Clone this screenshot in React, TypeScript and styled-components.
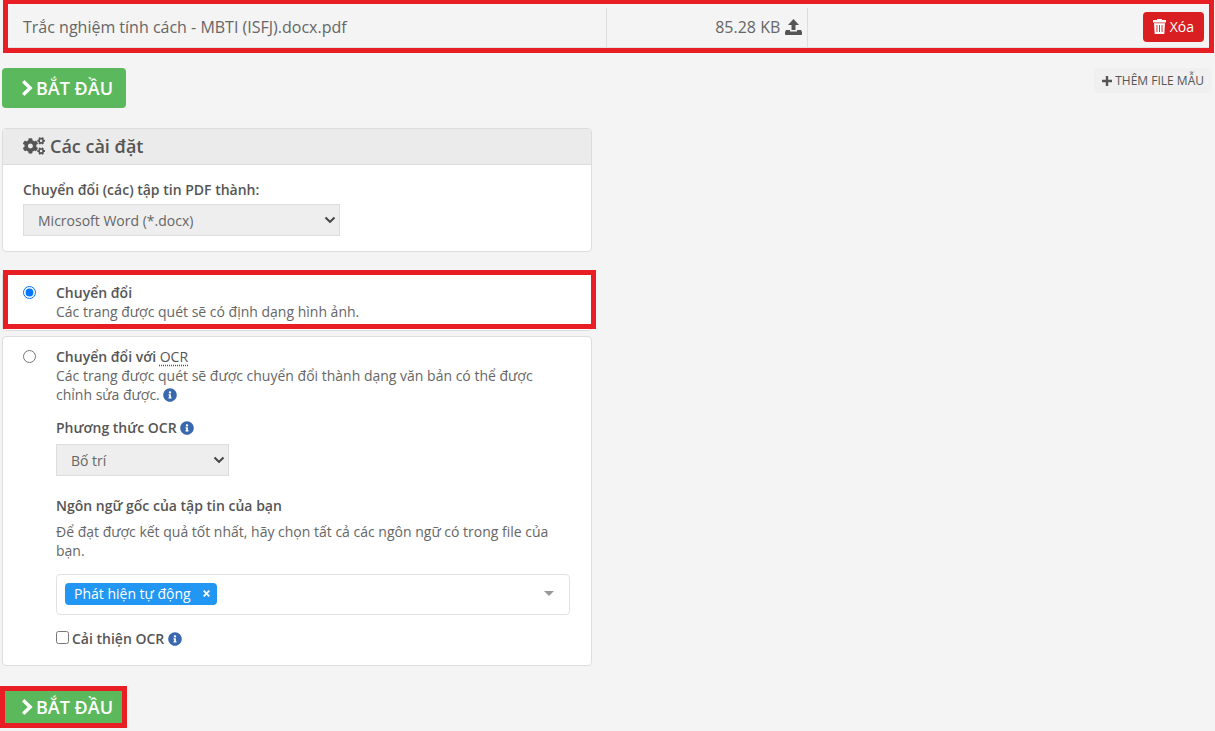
import React, { useState } from "react";
import styled, { createGlobalStyle, css } from "styled-components";
import { FaCogs, FaInfoCircle } from "react-icons/fa";

const GlobalStyle = createGlobalStyle`
  *, *::before, *::after { box-sizing: border-box; }
  body {
    margin: 0;
    background: #f4f4f4;
    color: #666;
    font-family: "Open Sans", "Noto Sans", sans-serif;
    font-size: 14px;
    line-height: 19px;
  }
  button, select, input { font-family: inherit; }
`;

const RED = "#e81e25";

const Page = styled.main`
  display: flex;
  flex-direction: column;
`;

const FileFrame = styled.section`
  margin: 0 1px 0 3px;
  padding-top: 4px;
  border: 5px solid ${RED};
  border-top-width: 4px;
`;

const FileTable = styled.table`
  width: 100%;
  table-layout: fixed;
  border-collapse: separate;
  border-spacing: 0;
  font-size: 16px;
  line-height: 22px;
`;

const FileCell = styled.td<{ $width?: string; $align?: string; $divided?: boolean }>`
  width: ${(p) => p.$width ?? "auto"};
  height: 40px;
  padding: 0 5px 2px 15px;
  vertical-align: middle;
  text-align: ${(p) => p.$align ?? "left"};
  border-bottom: 1px solid #e2e2e2;
  ${(p) => p.$divided && css`border-right: 1px solid #ddd;`}
`;

const SizeLabel = styled.span`
  display: flex;
  justify-content: flex-end;
  align-items: center;
  gap: 5px;
`;

const DeleteButton = styled.button`
  display: inline-flex;
  align-items: center;
  gap: 4px;
  height: 30px;
  padding: 0 10px 1px;
  border: 0;
  border-radius: 4px;
  background: #d91f22;
  color: #fff;
  font-size: 14px;
  vertical-align: middle;
  cursor: pointer;
`;

const Content = styled.div`
  padding: 15px 3px 3px 2px;
`;

const Toolbar = styled.div`
  display: flex;
  justify-content: space-between;
  align-items: flex-start;
  margin-bottom: 20px;
`;

const StartButton = styled.button`
  display: inline-flex;
  align-items: center;
  gap: 3px;
  height: 40px;
  padding: 0 13px 0 19px;
  border: 0;
  border-radius: 4px;
  background: #5cb85c;
  color: #fff;
  font-size: 18px;
  font-weight: 600;
  cursor: pointer;
`;

const SampleButton = styled.button`
  display: inline-flex;
  align-items: center;
  gap: 3px;
  height: 25px;
  padding: 0 8px;
  border: 0;
  border-radius: 3px;
  background: #f0f0f0;
  color: #555;
  font-size: 12px;
  cursor: pointer;
`;

const Columns = styled.div`
  display: grid;
  grid-template-columns: 1fr 1fr;
  gap: 30px;
`;

const Settings = styled.form`
  display: flex;
  flex-direction: column;
`;

const Card = styled.section<{ $after: number }>`
  position: relative;
  margin-bottom: ${(p) => p.$after}px;
  border: 1px solid #ddd;
  border-radius: 4px;
  background: #fff;
`;

const CardHeader = styled.h2`
  display: flex;
  align-items: center;
  gap: 5px;
  height: 36px;
  margin: 0;
  padding: 0 20px 1px;
  border-bottom: 1px solid #ddd;
  border-radius: 3px 3px 0 0;
  background: #ebebeb;
  color: #555;
  font-size: 18px;
  font-weight: 600;
`;

const CardBody = styled.div`
  padding: 15px 20px;
`;

const FieldLabel = styled.label<{ $after?: number }>`
  display: block;
  margin-bottom: ${(p) => p.$after ?? 5}px;
  color: #555;
  font-weight: 600;
`;

const SelectWrap = styled.div<{ $width: number }>`
  display: grid;
  align-items: center;
  width: ${(p) => p.$width}px;
  max-width: 100%;

  & > * { grid-area: 1 / 1; }
  & > svg {
    justify-self: end;
    margin-right: 4px;
    pointer-events: none;
  }
`;

const Select = styled.select`
  appearance: none;
  width: 100%;
  height: 32px;
  padding: 0 24px 0 14px;
  border: 1px solid #ddd;
  border-radius: 0;
  background: #eee;
  color: #666;
  font-size: 14px;
`;

const Option = styled.div<{ $padding: string }>`
  display: grid;
  grid-template-columns: 13px 1fr;
  column-gap: 20px;
  padding: ${(p) => p.$padding};
`;

const Radio = styled.input`
  width: 13px;
  height: 13px;
  margin: 3px 0 0;
`;

const OptionTitle = styled.label`
  display: block;
  color: #555;
  font-weight: 600;

  abbr {
    font-weight: 500;
    text-decoration: underline dotted;
    text-underline-offset: 3px;
  }
`;

const Text = styled.p<{ $after?: number }>`
  margin: 0 0 ${(p) => p.$after ?? 0}px;
`;

const Field = styled.div<{ $after: number }>`
  margin-bottom: ${(p) => p.$after}px;
`;

const InfoIcon = styled(FaInfoCircle)`
  width: 14px;
  height: 14px;
  color: #3a68ae;
  vertical-align: -2px;
`;

const TagBox = styled.div`
  display: flex;
  align-items: center;
  justify-content: space-between;
  height: 41px;
  margin-bottom: 14px;
  padding: 0 13px 2px 8px;
  border: 1px solid #e2e2e2;
  border-radius: 4px;
`;

const Tag = styled.span`
  display: inline-flex;
  align-items: center;
  height: 22px;
  gap: 10px;
  padding: 0 5px 0 9px;
  border-radius: 4px;
  background: #2196f3;
  color: #fff;
`;

const BareButton = styled.button`
  display: inline-flex;
  padding: 2px;
  border: 0;
  background: none;
  color: inherit;
  cursor: pointer;
`;

const CheckRow = styled.div`
  display: flex;
  align-items: center;
  gap: 3px;
  color: #555;
  font-weight: 600;

  input {
    width: 13px;
    height: 13px;
    margin: 0 0 2px;
  }
`;

const StartSlot = styled.div`
  position: relative;
  display: inline-flex;
  align-self: flex-start;
`;

const Highlight = styled.span<{ $inset: string }>`
  position: absolute;
  inset: ${(p) => p.$inset};
  border: 5px solid ${RED};
  pointer-events: none;
`;

const ChevronRight = () => (
  <svg width="12" height="18" viewBox="0 0 12 18" fill="none" aria-hidden="true">
    <path d="M2.200 2.200 9.200 9l-7 6.800" stroke="currentColor" strokeWidth="3.400" />
  </svg>
);

const ChevronDown = () => (
  <svg width="12" height="8" viewBox="0 0 12 8" fill="none" aria-hidden="true">
    <path d="m1.500 1.500 4.500 4.400 4.500-4.400" stroke="#444" strokeWidth="2.100" />
  </svg>
);

const UploadIcon = () => (
  <svg width="17" height="16" viewBox="0 0 17 16" fill="#555" aria-hidden="true">
    <path d="M8.500 0 14 6h-3.500v5h-4V6H3zM1 11h4v1.500h7V11h4l1 2v2.300q0 .7-.7.7H.7Q0 16 0 15.300V13z" />
  </svg>
);

const TrashIcon = () => (
  <svg width="13" height="15" viewBox="0 0 13 15" fill="currentColor" aria-hidden="true">
    <path fillRule="evenodd" d="M4 0h5v1h4v2.500H0V1h4zM1 4.300h11L11.300 15H1.700zM3.500 6v7h.9V6zm2.500 0v7h.9V6zm2.600 0v7h.9V6z" />
  </svg>
);

const PlusIcon = () => (
  <svg width="10" height="10" viewBox="0 0 10 10" aria-hidden="true">
    <path d="M5 0v10M0 5h10" stroke="currentColor" strokeWidth="2.400" />
  </svg>
);

const CloseIcon = () => (
  <svg width="7" height="7" viewBox="0 0 7 7" aria-hidden="true">
    <path d="m.7.7 5.600 5.600M6.300.7.7 6.300" stroke="currentColor" strokeWidth="1.800" />
  </svg>
);

const CaretDown = () => (
  <svg width="10" height="5" viewBox="0 0 10 5" aria-hidden="true">
    <path d="M0 0h10L5 5z" fill="#999" />
  </svg>
);

export default function App() {
  const [mode, setMode] = useState("plain");
  const [improve, setImprove] = useState(false);

  return (
    <Page>
      <GlobalStyle />
      <FileFrame>
        <FileTable>
          <tbody>
            <tr>
              <FileCell $width="49.9%" $divided>Trắc nghiệm tính cách - MBTI (ISFJ).docx.pdf</FileCell>
              <FileCell $width="201px" $divided>
                <SizeLabel>85.28 KB <UploadIcon /></SizeLabel>
              </FileCell>
              <FileCell $align="right">
                <DeleteButton type="button"><TrashIcon />Xóa</DeleteButton>
              </FileCell>
            </tr>
          </tbody>
        </FileTable>
      </FileFrame>

      <Content>
        <Toolbar>
          <StartButton type="button"><ChevronRight />BẮT ĐẦU</StartButton>
          <SampleButton type="button"><PlusIcon />THÊM FILE MẪU</SampleButton>
        </Toolbar>

        <Columns>
          <Settings onSubmit={(e) => e.preventDefault()}>
            <Card $after={19}>
              <CardHeader><FaCogs size={22} aria-hidden="true" />Các cài đặt</CardHeader>
              <CardBody>
                <FieldLabel htmlFor="format">Chuyển đổi (các) tập tin PDF thành:</FieldLabel>
                <SelectWrap $width={317}>
                  <Select id="format"><option>Microsoft Word (*.docx)</option></Select>
                  <ChevronDown />
                </SelectWrap>
              </CardBody>
            </Card>

            <Card $after={5}>
              <Option $padding="11px 20px 9px">
                <Radio type="radio" id="plain" name="mode" checked={mode === "plain"} onChange={() => setMode("plain")} />
                <div>
                  <OptionTitle htmlFor="plain">Chuyển đổi</OptionTitle>
                  <Text>Các trang được quét sẽ có định dạng hình ảnh.</Text>
                </div>
              </Option>
              <Highlight $inset="-2px -5px 1px 0" />
            </Card>

            <Card $after={21}>
              <Option $padding="10px 21px 17px 20px">
                <Radio type="radio" id="ocr" name="mode" checked={mode === "ocr"} onChange={() => setMode("ocr")} />
                <div>
                  <OptionTitle htmlFor="ocr">Chuyển đổi với <abbr>OCR</abbr></OptionTitle>
                  <Text $after={14}>
                    Các trang được quét sẽ được chuyển đổi thành dạng văn bản có thể được chỉnh sửa được. <InfoIcon />
                  </Text>
                  <Field $after={20}>
                    <FieldLabel htmlFor="method" $after={7}>Phương thức OCR <InfoIcon /></FieldLabel>
                    <SelectWrap $width={173}>
                      <Select id="method"><option>Bố trí</option></Select>
                      <ChevronDown />
                    </SelectWrap>
                  </Field>
                  <FieldLabel as="div" $after={7}>Ngôn ngữ gốc của tập tin của bạn</FieldLabel>
                  <Text $after={14}>
                    Để đạt được kết quả tốt nhất, hãy chọn tất cả các ngôn ngữ có trong file của bạn.
                  </Text>
                  <TagBox>
                    <Tag>
                      Phát hiện tự động
                      <BareButton type="button" aria-label="Xóa ngôn ngữ"><CloseIcon /></BareButton>
                    </Tag>
                    <BareButton type="button" aria-label="Chọn ngôn ngữ"><CaretDown /></BareButton>
                  </TagBox>
                  <CheckRow>
                    <input type="checkbox" id="improve" checked={improve} onChange={(e) => setImprove(e.target.checked)} />
                    <label htmlFor="improve">Cải thiện OCR <InfoIcon /></label>
                  </CheckRow>
                </div>
              </Option>
            </Card>

            <StartSlot>
              <StartButton type="submit"><ChevronRight />BẮT ĐẦU</StartButton>
              <Highlight $inset="-1px -1px -1px -2px" />
            </StartSlot>
          </Settings>
        </Columns>
      </Content>
    </Page>
  );
}
